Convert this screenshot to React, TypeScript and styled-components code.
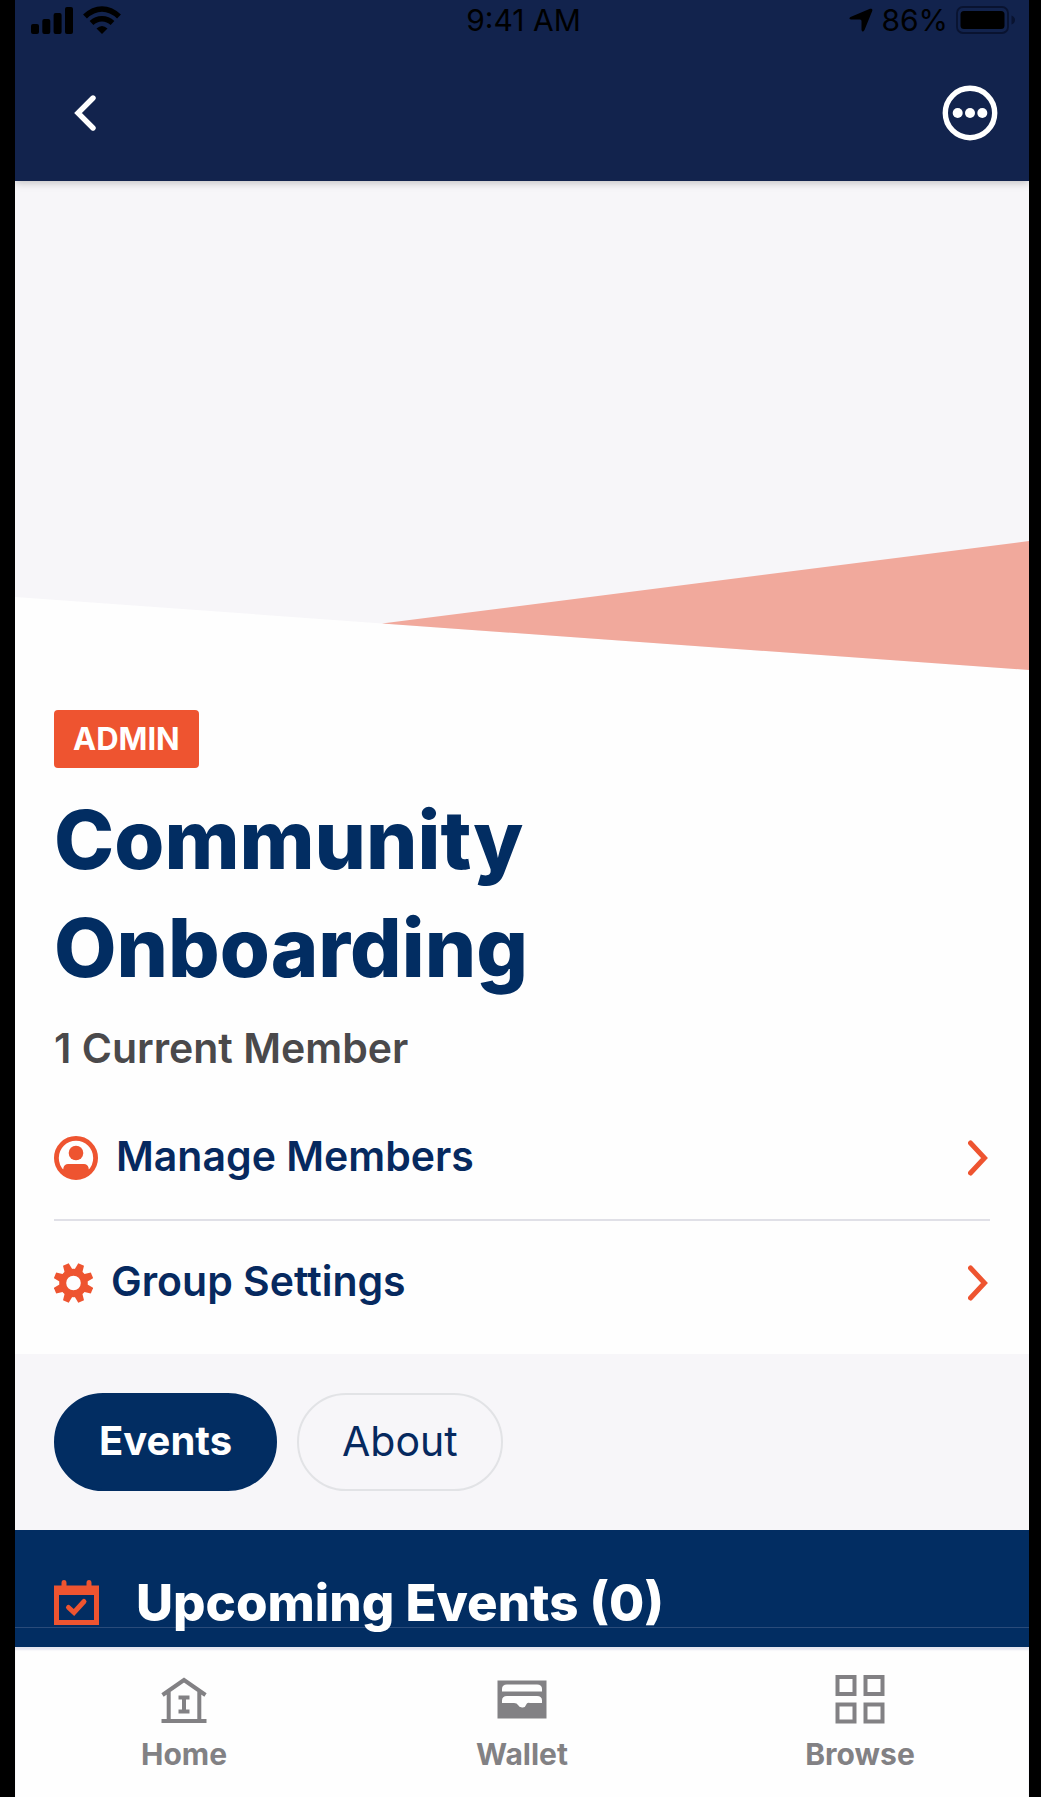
import React, { useState } from "react";
import styled, { createGlobalStyle } from "styled-components";

const color = {
  bar: "#12234d",
  navy: "#022d62",
  orange: "#ee5430",
  salmon: "#f1a99c",
  mist: "#f7f6f9",
  text: "#4a494b",
  grey: "#828184",
};

const GlobalStyle = createGlobalStyle`
  *, *::before, *::after { box-sizing: border-box; }
  body {
    margin: 0;
    background: #000;
    font-family: Inter, "Liberation Sans", sans-serif;
  }
  button { font: inherit; color: inherit; background: none; border: 0; padding: 0; cursor: pointer; }
  a { color: inherit; text-decoration: none; }
  h1, h2, p, ul { margin: 0; padding: 0; }
  svg { display: block; flex: none; }
`;

const Screen = styled.div`
  display: flex;
  flex-direction: column;
  min-height: 100vh;
  margin: 0 12px 0 15px;
  background: #fefefe;
`;

const Header = styled.header`
  position: relative;
  background: ${color.bar};
  box-shadow: 0 2px 8px rgba(0, 0, 0, 0.22);
`;

const StatusBar = styled.div`
  display: grid;
  grid-template-columns: 1fr auto 1fr;
  align-items: center;
  height: 44px;
  padding: 0 13px 4px 16px;
  color: #000;
  font-size: 30px;
  line-height: 32px;
`;

const StatusGroup = styled.div<{ $end?: boolean }>`
  display: flex;
  align-items: center;
  justify-content: ${(p) => (p.$end ? "flex-end" : "flex-start")};
  gap: ${(p) => (p.$end ? "8px" : "10px")};
`;

const Toolbar = styled.div`
  display: flex;
  align-items: center;
  justify-content: space-between;
  height: 137px;
  padding: 0 31px 0 42px;
`;

const IconButton = styled.button`
  display: flex;
  align-items: center;
  justify-content: center;
  width: 56px;
  height: 56px;
  color: #fff;
`;

const Hero = styled.div`
  background: ${color.mist};
  svg { width: 100%; height: 489px; }
`;

const Details = styled.section`
  display: flex;
  flex-direction: column;
  align-items: flex-start;
  padding: 40px 39px 10px;
`;

const Badge = styled.span`
  padding: 0 19px;
  border-radius: 4px;
  background: ${color.orange};
  color: #fff;
  font-size: 31px;
  font-weight: 700;
  line-height: 58px;
`;

const Title = styled.h1`
  max-width: 560px;
  margin-top: 18px;
  color: ${color.navy};
  font-size: 81px;
  font-weight: 800;
  line-height: 108px;
`;

const Subtitle = styled.p`
  margin-top: 20px;
  color: ${color.text};
  font-size: 41px;
  font-weight: 600;
  line-height: 52px;
`;

const Menu = styled.ul`
  align-self: stretch;
  margin-top: 22px;
  list-style: none;
`;

const MenuItem = styled.li`
  & + & { border-top: 2px solid #e0e0e7; }
`;

const MenuLink = styled.a`
  display: flex;
  align-items: center;
  gap: 18px;
  height: 123px;
  padding-right: 2px;
  color: #06295f;
  font-size: 41px;
  font-weight: 600;
  line-height: 52px;
  svg { color: ${color.orange}; }
`;

const MenuLabel = styled.span`
  flex: 1;
  padding-bottom: 4px;
`;

const Tabs = styled.div`
  display: flex;
  gap: 20px;
  padding: 39px;
  background: ${color.mist};
`;

const Tab = styled.button<{ $active: boolean }>`
  height: 98px;
  padding: 0 43px 2px;
  border: 2px solid ${(p) => (p.$active ? color.navy : "#e2e3e6")};
  border-radius: 49px;
  background: ${(p) => (p.$active ? color.navy : "transparent")};
  color: ${(p) => (p.$active ? "#fff" : "#06295f")};
  font-size: ${(p) => (p.$active ? "40px" : "41px")};
  font-weight: ${(p) => (p.$active ? 700 : 400)};
  line-height: 52px;
`;

const Panel = styled.section`
  flex: 1;
  padding-bottom: 19px;
  background: ${color.navy};
`;

const PanelHeader = styled.div`
  display: flex;
  align-items: center;
  gap: 37px;
  padding: 48px 39px 0;
  border-bottom: 1px solid #2a4b7a;
`;

const PanelTitle = styled.h2`
  color: #fff;
  font-size: 51px;
  font-weight: 800;
  line-height: 49px;
`;

const BottomNav = styled.nav`
  position: relative;
  display: grid;
  grid-template-columns: repeat(3, 1fr);
  background: #fefefe;
  box-shadow: inset 0 3px 2px #e6e6f0;
`;

const NavLink = styled.a`
  display: flex;
  flex-direction: column;
  align-items: center;
  gap: 11px;
  padding: 28px 0 25px;
  color: ${color.grey};
  font-size: 30px;
  font-weight: 700;
  line-height: 36px;
`;

const SignalIcon = () => (
  <svg width="42" height="27" viewBox="0 0 42 27" fill="currentColor" aria-hidden="true">
    <rect x="0" y="17" width="8" height="10" rx="2" />
    <rect x="11.3" y="12" width="8" height="15" rx="2" />
    <rect x="22.6" y="6" width="8" height="21" rx="2" />
    <rect x="34" y="0" width="8" height="27" rx="2" />
  </svg>
);

const WifiIcon = () => (
  <svg width="38" height="28" viewBox="0 0 38 28" fill="none" stroke="currentColor" aria-hidden="true">
    <path d="M2 10.5Q10 3 19 3t17 7.5" strokeWidth="5.6" />
    <path d="M8.5 17Q13 12.7 19 12.7t10.5 4.3" strokeWidth="5.4" />
    <path d="M13.5 22.6Q19 17.5 24.5 22.6L19 28z" fill="currentColor" stroke="none" />
  </svg>
);

const LocationIcon = () => (
  <svg width="24" height="24" viewBox="0 0 24 24" fill="currentColor" aria-hidden="true">
    <path d="M21 .8Q24 0 23.200 3L15.500 22Q13.500 25 12.500 22V13Q12.500 11.500 11 11.500H2Q-1 10.500 1.500 9Z" />
  </svg>
);

const BatteryIcon = () => (
  <svg width="60" height="28" viewBox="0 0 60 28" fill="none" aria-hidden="true">
    <rect x="1" y="1" width="51" height="26" rx="6" stroke="#091330" strokeWidth="1.8" />
    <rect x="4.5" y="5" width="44" height="18" rx="3.5" fill="#000" />
    <path d="M55.5 9.5Q59 11 59 14t-3.5 4.5z" fill="#091330" />
  </svg>
);

const BackIcon = () => (
  <svg width="24" height="36" viewBox="0 0 24 36" fill="none" stroke="currentColor" strokeWidth="5.4" strokeLinecap="round" aria-hidden="true">
    <path d="M20 3 5 18 20 33" />
  </svg>
);

const MoreIcon = () => (
  <svg width="56" height="56" viewBox="0 0 56 56" fill="currentColor" aria-hidden="true">
    <circle cx="28" cy="28" r="24.7" fill="none" stroke="currentColor" strokeWidth="5.4" />
    <circle cx="15.7" cy="28" r="5" />
    <circle cx="28" cy="28" r="5" />
    <circle cx="40.3" cy="28" r="5" />
  </svg>
);

const HeroShape = () => (
  <svg viewBox="0 0 1014 489" preserveAspectRatio="none" aria-hidden="true">
    <path d="M0 416 1014 489H0z" fill="#fefefe" />
    <path d="M367 442.5 1014 360V489z" fill={color.salmon} />
  </svg>
);

const MemberIcon = () => (
  <svg width="44" height="44" viewBox="0 0 44 44" aria-hidden="true">
    <circle cx="22" cy="22" r="19.6" fill="none" stroke="currentColor" strokeWidth="4.8" />
    <circle cx="22" cy="17" r="7.3" fill="currentColor" />
    <path d="M6 36Q9.5 35 9.500 31.500 10.500 28 14 28H30Q33.500 28 34.500 31.500 34.500 35 38 36Q31 43 22 43T6 36z" fill="currentColor" />
  </svg>
);

const GearIcon = () => (
  <svg width="39" height="40" viewBox="-19.5 -20 39 40" fill="currentColor" aria-hidden="true">
    <circle r="10.8" fill="none" stroke="currentColor" strokeWidth="7" />
    {[22.5, 67.5, 112.5, 157.5, 202.5, 247.5, 292.5, 337.5].map((angle) => (
      <path key={angle} d="M-4.2-12.5-3.1-20H3.1L4.2-12.5z" transform={`rotate(${angle})`} />
    ))}
  </svg>
);

const ChevronIcon = () => (
  <svg width="20" height="36" viewBox="0 0 20 36" fill="none" stroke="currentColor" strokeWidth="5" strokeLinecap="round" aria-hidden="true">
    <path d="M2.5 3 16.5 18 2.5 33" />
  </svg>
);

const CalendarIcon = () => (
  <svg width="45" height="45" viewBox="0 0 45 45" aria-hidden="true">
    <path
      fill={color.orange}
      fillRule="evenodd"
      d="M0 5.5H7.5V3Q7.500 0 10 0T12.500 3V5.500H32.500V3Q32.500 0 35 0T37.500 3V5.500H45V45H0zM5 15V40H40V15z"
    />
    <path d="M14.500 27.500 20 32.500 30 21.500" fill="none" stroke={color.orange} strokeWidth="5" strokeLinecap="round" />
  </svg>
);

const HomeIcon = () => (
  <svg width="50" height="50" viewBox="0 0 50 50" fill="none" stroke="currentColor" aria-hidden="true">
    <path d="M3.5 20 25 5 46.5 20M9.7 17V46M40.3 17V46M2.5 46H47.5" strokeWidth="4" />
    <path d="M19.5 22.5H30.5M25 22.5V36.5M19.5 36.5H30.5" strokeWidth="4" />
  </svg>
);

const WalletIcon = () => (
  <svg width="50" height="50" viewBox="0 0 50 50" aria-hidden="true">
    <path
      fill="currentColor"
      fillRule="evenodd"
      d="M.5 5.5H49.5V43.5H.5zM5 16.5H45V14Q45 9.5 40 9.5H10Q5 9.5 5 14zM5 28H17Q20 28 21 30T25 32.5 29 30 33 28H45V25.5Q45 21 40 21H10Q5 21 5 25.5z"
    />
  </svg>
);

const BrowseIcon = () => (
  <svg width="50" height="50" viewBox="0 0 50 50" fill="none" stroke="currentColor" strokeWidth="4" aria-hidden="true">
    <rect x="2.5" y="2" width="17" height="17" />
    <rect x="30.5" y="2" width="17" height="17" />
    <rect x="2.5" y="29.5" width="17" height="17" />
    <rect x="30.5" y="29.5" width="17" height="17" />
  </svg>
);

const menu = [
  { label: "Manage Members", Icon: MemberIcon },
  { label: "Group Settings", Icon: GearIcon },
];

const tabs = ["Events", "About"];

const destinations = [
  { label: "Home", Icon: HomeIcon },
  { label: "Wallet", Icon: WalletIcon },
  { label: "Browse", Icon: BrowseIcon },
];

export default function App() {
  const [active, setActive] = useState("Events");

  return (
    <>
      <GlobalStyle />
      <Screen>
        <Header>
          <StatusBar>
            <StatusGroup>
              <SignalIcon />
              <WifiIcon />
            </StatusGroup>
            <span>9:41 AM</span>
            <StatusGroup $end>
              <LocationIcon />
              <span>86%</span>
              <BatteryIcon />
            </StatusGroup>
          </StatusBar>
          <Toolbar>
            <IconButton type="button" aria-label="Back">
              <BackIcon />
            </IconButton>
            <IconButton type="button" aria-label="More options">
              <MoreIcon />
            </IconButton>
          </Toolbar>
        </Header>

        <Hero>
          <HeroShape />
        </Hero>

        <Details>
          <Badge>ADMIN</Badge>
          <Title>Community Onboarding</Title>
          <Subtitle>1 Current Member</Subtitle>
          <Menu>
            {menu.map(({ label, Icon }) => (
              <MenuItem key={label}>
                <MenuLink href="#">
                  <Icon />
                  <MenuLabel>{label}</MenuLabel>
                  <ChevronIcon />
                </MenuLink>
              </MenuItem>
            ))}
          </Menu>
        </Details>

        <Tabs role="tablist">
          {tabs.map((tab) => (
            <Tab
              key={tab}
              type="button"
              role="tab"
              aria-selected={tab === active}
              $active={tab === active}
              onClick={() => setActive(tab)}
            >
              {tab}
            </Tab>
          ))}
        </Tabs>

        <Panel>
          <PanelHeader>
            <CalendarIcon />
            <PanelTitle>Upcoming Events (0)</PanelTitle>
          </PanelHeader>
        </Panel>

        <BottomNav>
          {destinations.map(({ label, Icon }) => (
            <NavLink key={label} href="#">
              <Icon />
              {label}
            </NavLink>
          ))}
        </BottomNav>
      </Screen>
    </>
  );
}
